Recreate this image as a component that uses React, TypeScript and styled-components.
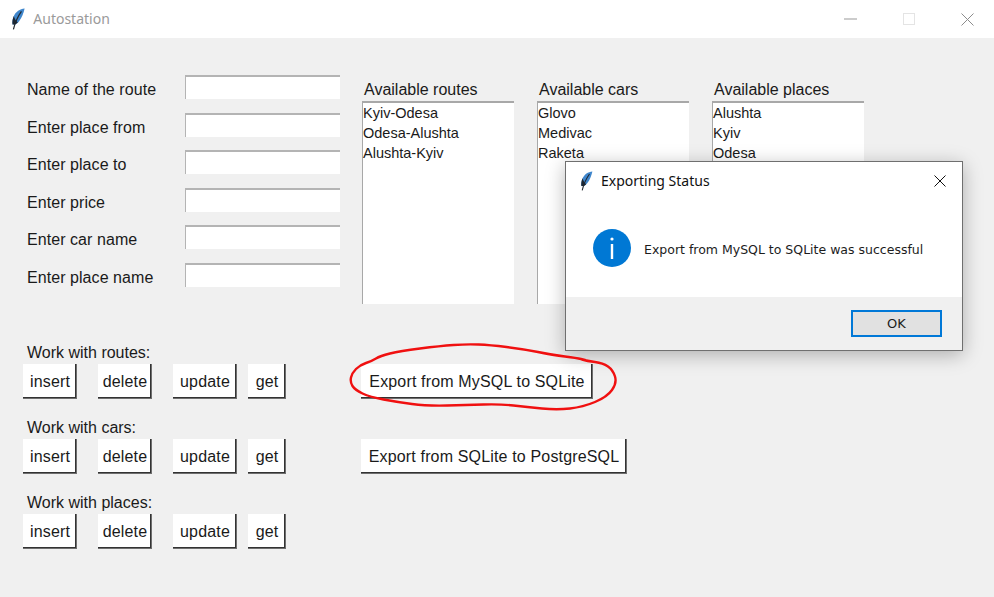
import React from 'react';
import styled, { createGlobalStyle } from 'styled-components';

const GlobalStyle = createGlobalStyle`
  html, body {
    margin: 0;
    padding: 0;
    background: #f0f0f0;
  }
  body {
    font-family: "Liberation Sans", Arial, sans-serif;
  }
`;

const Page = styled.div`
  position: relative;
  width: 994px;
  height: 597px;
  overflow: hidden;
  background: #f0f0f0;
  color: #1a1a1a;
`;

const TitleBar = styled.div`
  display: flex;
  align-items: center;
  height: 38px;
  background: #fff;
  padding-left: 11px;
  box-sizing: border-box;
`;

const TitleText = styled.span`
  margin: -2px 0 0 8px;
  font-family: "Noto Sans", sans-serif;
  font-size: 14px;
  color: #9a9a9a;
`;

const WindowControls = styled.div`
  display: flex;
  align-items: center;
  margin-left: auto;
  margin-right: -2px;
`;

const ControlSlot = styled.div`
  display: flex;
  justify-content: center;
  align-items: center;
  width: 58px;
  height: 38px;
`;

const Main = styled.div`
  display: flex;
  flex-direction: column;
  padding: 37px 0 0 23px;
`;

const TopSection = styled.div`
  display: flex;
  height: 270px;
`;

const Form = styled.div`
  display: grid;
  grid-template-columns: 162px 155px;
  grid-auto-rows: 24px;
  row-gap: 13.5px;
  width: 339px;
  align-content: start;
  align-items: center;
`;

const FieldLabel = styled.div`
  padding: 6px 0 0 4px;
  font-size: 16px;
  letter-spacing: 0.06px;
  white-space: nowrap;
`;

const TextInput = styled.input`
  box-sizing: border-box;
  width: 155px;
  height: 24px;
  background: #fff;
  border: none;
  border-top: 2px solid #b4b4b4;
  border-left: 1px solid #b4b4b4;
  padding: 0;
`;

const ListGroup = styled.div`
  display: flex;
  gap: 23px;
  padding-top: 6px;
`;

const ListColumn = styled.div`
  display: flex;
  flex-direction: column;
  width: 152px;
`;

const ListCaption = styled.div`
  height: 20px;
  padding-left: 2px;
  font-size: 16px;
  line-height: 17px;
  white-space: nowrap;
`;

const ListBox = styled.ul`
  box-sizing: border-box;
  height: 203px;
  margin: 0;
  padding: 0;
  list-style: none;
  background: #fff;
  border-top: 2px solid #a8a8a8;
  border-left: 1px solid #a8a8a8;
`;

const ListItem = styled.li`
  height: 20px;
  font-size: 14.5px;
  line-height: 20px;
  white-space: nowrap;
`;

const ActionSections = styled.div`
  display: flex;
  flex-direction: column;
  gap: 21px;
`;

const ActionRow = styled.div`
  display: flex;
  align-items: flex-end;
`;

const ActionGroup = styled.div`
  display: flex;
  flex-direction: column;
  width: 338px;
`;

const ActionTitle = styled.div`
  height: 19px;
  padding-left: 4px;
  font-size: 16px;
  line-height: 16px;
`;

const ButtonRow = styled.div`
  display: flex;
`;

const TkButton = styled.button<{ $width: number; $gap?: number }>`
  box-sizing: border-box;
  width: ${(p) => p.$width}px;
  height: 35px;
  margin: 0 ${(p) => p.$gap ?? 0}px 0 0;
  padding: 0;
  font-family: "Liberation Sans", Arial, sans-serif;
  font-size: 16px;
  letter-spacing: 0.16px;
  color: #1a1a1a;
  white-space: nowrap;
  background: #fff;
  border: none;
  box-shadow: inset -1px -1px 0 #6e6e6e, inset -2px -2px 0 #333;
`;

const Dialog = styled.div`
  position: absolute;
  left: 565px;
  top: 161px;
  box-sizing: border-box;
  width: 398px;
  height: 190px;
  display: flex;
  flex-direction: column;
  background: #fff;
  border: 1px solid #6f6f6f;
  box-shadow: 0 4px 18px rgba(0, 0, 0, 0.28);
`;

const DialogHeader = styled.div`
  display: flex;
  align-items: center;
  height: 38px;
  padding: 0 16px 0 14px;
`;

const DialogTitle = styled.span`
  margin: -2px 0 0 8px;
  font-family: "Noto Sans", sans-serif;
  font-size: 14px;
  color: #111;
`;

const CloseIcon = styled.svg`
  margin-left: auto;
`;

const DialogBody = styled.div`
  display: flex;
  align-items: center;
  flex: 1;
  padding-left: 27px;
`;

const InfoIcon = styled.svg`
  margin-top: -2px;
`;

const DialogMessage = styled.span`
  margin: 2px 0 0 13px;
  font-family: "DejaVu Sans", sans-serif;
  font-size: 12.5px;
  color: #1c1c1c;
  white-space: nowrap;
`;

const DialogFooter = styled.div`
  display: flex;
  justify-content: flex-end;
  align-items: center;
  height: 53px;
  padding-right: 20px;
  background: #f0f0f0;
`;

const OkButton = styled.button`
  box-sizing: border-box;
  width: 91px;
  height: 27px;
  padding: 0;
  font-family: "DejaVu Sans", sans-serif;
  font-size: 13px;
  color: #1c1c1c;
  background: #e1e1e1;
  border: 2px solid #0078d7;
`;

const RedCircle = styled.svg`
  position: absolute;
  left: 340px;
  top: 335px;
  pointer-events: none;
`;

const Feather = ({ size }: { size: number }) => (
  <svg width={size * 0.65} height={size} viewBox="0 0 13 20">
    <path d="M12.4 0.4 C8 0.8 4.4 3.4 2.6 7.2 C1.4 9.8 1 12.6 1.4 15 C3.4 15.4 5.8 14.2 7.4 12 C10 8.6 11.4 4.6 12.4 0.4 Z" fill="#3f86cc" />
    <path d="M2.6 7.2 C1.4 9.8 1 12.6 1.4 15 C3.2 15.4 5 14.6 6.2 13.2 C4.6 11.8 3.2 9.6 2.6 7.2 Z" fill="#1d2733" />
    <path d="M9.5 3 C6.6 7 4 12 2.2 19.4" fill="none" stroke="#20262e" strokeWidth="1.1" />
  </svg>
);

const fields = [
  'Name of the route',
  'Enter place from',
  'Enter place to',
  'Enter price',
  'Enter car name',
  'Enter place name',
];

const lists = [
  { title: 'Available routes', items: ['Kyiv-Odesa', 'Odesa-Alushta', 'Alushta-Kyiv'] },
  { title: 'Available cars', items: ['Glovo', 'Medivac', 'Raketa'] },
  { title: 'Available places', items: ['Alushta', 'Kyiv', 'Odesa'] },
];

const sections = [
  { title: 'Work with routes:', exportLabel: 'Export from MySQL to SQLite', exportWidth: 232 },
  { title: 'Work with cars:', exportLabel: 'Export from SQLite to PostgreSQL', exportWidth: 266 },
  { title: 'Work with places:' },
];

// hand-drawn marker stroke around the export button
const markerPoints = [
  [585, 360], [577, 358], [553, 355], [523, 349], [490, 345], [467, 344], [440, 346],
  [400, 351], [380, 356], [372, 361], [360, 365], [352, 373], [350, 382], [355, 390],
  [370, 397], [397, 402], [427, 406], [467, 405], [500, 404], [527, 407], [557, 410],
  [583, 407], [607, 397], [617, 383], [613, 370], [603, 363], [587, 361], [577, 358],
];

const markerPath = markerPoints.reduce((d, [x, y], i) => {
  if (i === 0) return `M${x} ${y}`;
  const [px, py] = markerPoints[i - 1];
  return `${d} Q${px} ${py} ${(px + x) / 2} ${(py + y) / 2}`;
}, '');

const App = () => {
  return (
    <Page>
      <GlobalStyle />
      <TitleBar>
        <Feather size={22} />
        <TitleText>Autostation</TitleText>
        <WindowControls>
          <ControlSlot>
            <svg width="14" height="2" viewBox="0 0 14 2">
              <rect width="13" height="1" y="0.5" fill="#9a9a9a" />
            </svg>
          </ControlSlot>
          <ControlSlot>
            <svg width="12" height="12" viewBox="0 0 12 12">
              <rect x="0.5" y="0.5" width="11" height="11" fill="none" stroke="#e4e4e4" />
            </svg>
          </ControlSlot>
          <ControlSlot>
            <svg width="13" height="13" viewBox="0 0 13 13">
              <path d="M0.5 0.5 L12.5 12.5 M12.5 0.5 L0.5 12.5" stroke="#8c8c8c" fill="none" />
            </svg>
          </ControlSlot>
        </WindowControls>
      </TitleBar>

      <Main>
        <TopSection>
          <Form>
            {fields.map((field) => (
              <React.Fragment key={field}>
                <FieldLabel>{field}</FieldLabel>
                <TextInput />
              </React.Fragment>
            ))}
          </Form>
          <ListGroup>
            {lists.map((list) => (
              <ListColumn key={list.title}>
                <ListCaption>{list.title}</ListCaption>
                <ListBox>
                  {list.items.map((item) => (
                    <ListItem key={item}>{item}</ListItem>
                  ))}
                </ListBox>
              </ListColumn>
            ))}
          </ListGroup>
        </TopSection>

        <ActionSections>
          {sections.map((section) => (
            <ActionRow key={section.title}>
              <ActionGroup>
                <ActionTitle>{section.title}</ActionTitle>
                <ButtonRow>
                  <TkButton $width={54} $gap={21}>insert</TkButton>
                  <TkButton $width={54} $gap={21}>delete</TkButton>
                  <TkButton $width={64} $gap={11}>update</TkButton>
                  <TkButton $width={38}>get</TkButton>
                </ButtonRow>
              </ActionGroup>
              {section.exportLabel && (
                <TkButton $width={section.exportWidth}>{section.exportLabel}</TkButton>
              )}
            </ActionRow>
          ))}
        </ActionSections>
      </Main>

      <Dialog>
        <DialogHeader>
          <Feather size={20} />
          <DialogTitle>Exporting Status</DialogTitle>
          <CloseIcon width="12" height="12" viewBox="0 0 12 12">
            <path d="M0.5 0.5 L11.5 11.5 M11.5 0.5 L0.5 11.5" stroke="#111" fill="none" />
          </CloseIcon>
        </DialogHeader>
        <DialogBody>
          <InfoIcon width="38" height="38" viewBox="0 0 38 38">
            <circle cx="19" cy="19" r="19" fill="#0078d4" />
            <circle cx="19" cy="10" r="1.6" fill="#fff" />
            <rect x="17.8" y="15" width="2.4" height="15" fill="#fff" />
          </InfoIcon>
          <DialogMessage>Export from MySQL to SQLite was successful</DialogMessage>
        </DialogBody>
        <DialogFooter>
          <OkButton>OK</OkButton>
        </DialogFooter>
      </Dialog>

      <RedCircle width="300" height="100" viewBox="340 335 300 100">
        <path d={markerPath} fill="none" stroke="#f01010" strokeWidth="2.4" strokeLinecap="round" />
      </RedCircle>
    </Page>
  );
};

export default App;
